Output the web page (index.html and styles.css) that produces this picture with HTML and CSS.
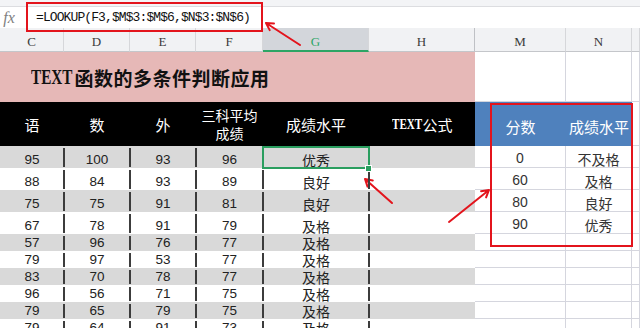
FILE: index.html
```html
<!DOCTYPE html>
<html lang="zh">
<head>
<meta charset="utf-8">
<title>TEXT函数的多条件判断应用</title>
<link rel="stylesheet" href="styles.css">
</head>
<body>
<div class="fbar">
  <div class="frow">
    <div class="fx">fx</div>
    <div class="formula">=LOOKUP(F3,$M$3:$M$6,$N$3:$N$6)</div>
  </div>
</div>
<div class="sheet">
  <div class="ch">C</div><div class="ch">D</div><div class="ch">E</div><div class="ch">F</div><div class="ch sel">G</div><div class="ch dark">H</div><div class="ch">M</div><div class="ch">N</div><div class="ch last"></div>

  <div class="title"><span class="lat">TEXT</span>函数的多条件判断应用</div><div class="g"></div><div class="g"></div><div class="g"></div>

  <div class="hd">语</div><div class="hd">数</div><div class="hd">外</div><div class="hd two">三科平均<br>成绩</div><div class="hd">成绩水平</div><div class="hd"><span class="lat2">TEXT</span>公式</div><div class="bh">分数</div><div class="bh">成绩水平</div><div class="g"></div>

  <div class="d alt s">95</div><div class="d alt s">100</div><div class="d alt s">93</div><div class="d alt s">96</div><div class="d alt cn active">优秀<span class="handle"></span></div><div class="d alt"></div><div class="g n">0</div><div class="g cn">不及格</div><div class="g"></div>

  <div class="d s">88</div><div class="d s">84</div><div class="d s">93</div><div class="d s">89</div><div class="d cn s">良好</div><div class="d"></div><div class="g n">60</div><div class="g cn">及格</div><div class="g"></div>

  <div class="d alt s">75</div><div class="d alt s">75</div><div class="d alt s">91</div><div class="d alt s">81</div><div class="d alt cn s">良好</div><div class="d alt"></div><div class="g n">80</div><div class="g cn">良好</div><div class="g"></div>

  <div class="d s">67</div><div class="d s">78</div><div class="d s">91</div><div class="d s">79</div><div class="d cn s">及格</div><div class="d"></div><div class="g n">90</div><div class="g cn">优秀</div><div class="g"></div>

  <div class="d alt s">57</div><div class="d alt s">96</div><div class="d alt s">76</div><div class="d alt s">77</div><div class="d alt cn s">及格</div><div class="d alt"></div><div class="g"></div><div class="g"></div><div class="g"></div>

  <div class="d s">79</div><div class="d s">97</div><div class="d s">53</div><div class="d s">77</div><div class="d cn s">及格</div><div class="d"></div><div class="g"></div><div class="g"></div><div class="g"></div>

  <div class="d alt s">83</div><div class="d alt s">70</div><div class="d alt s">78</div><div class="d alt s">77</div><div class="d alt cn s">及格</div><div class="d alt"></div><div class="g"></div><div class="g"></div><div class="g"></div>

  <div class="d s">96</div><div class="d s">56</div><div class="d s">71</div><div class="d s">75</div><div class="d cn s">及格</div><div class="d"></div><div class="g"></div><div class="g"></div><div class="g"></div>

  <div class="d alt s">79</div><div class="d alt s">65</div><div class="d alt s">79</div><div class="d alt s">75</div><div class="d alt cn s">及格</div><div class="d alt"></div><div class="g"></div><div class="g"></div><div class="g"></div>

  <div class="d s">79</div><div class="d s">64</div><div class="d s">91</div><div class="d s">73</div><div class="d cn s">及格</div><div class="d"></div><div class="g"></div><div class="g"></div><div class="g"></div>
</div>

<div class="mark mark-formula"></div>
<div class="mark mark-lookup"></div>
<svg class="arrows" width="640" height="328" viewBox="0 0 640 328">
  <g fill="none" stroke="#e3141c" stroke-width="2" stroke-linecap="round" stroke-linejoin="round">
    <path d="M300 45 L266 23 M269.7 30.1 L266 23 L274 23.4"/>
    <path d="M392 203 L365 179 M367.5 186.6 L365 179 L372.8 180.6"/>
    <path d="M449 222 L489 190 M481.1 191.2 L489 190 L486.1 197.4"/>
  </g>
</svg>
</body>
</html>
```
FILE: styles.css
```css
html, body {
  margin: 0;
  padding: 0;
}
body {
  width: 640px;
  height: 328px;
  overflow: hidden;
  position: relative;
  background: #fff;
  font-family: "Noto Sans CJK SC", "Noto Sans", sans-serif;
  color: #222;
}
.fbar {
  height: 28px;
  box-sizing: border-box;
  padding-top: 6px;
  background: #f3f4f6;
  border-bottom: 1px solid #cfd0d3;
}
.frow {
  display: flex;
  height: 21px;
  background: #fff;
  border-top: 1px solid #dcdde0;
  align-items: center;
}
.fx {
  width: 26px;
  text-align: center;
  font-family: "Liberation Serif", serif;
  font-style: italic;
  font-size: 16px;
  color: #808080;
  margin-left: -4px;
  line-height: 20px;
}
.formula {
  padding-left: 14px;
  font-family: "Liberation Mono", monospace;
  font-size: 13px;
  letter-spacing: -0.9px;
  color: #111;
  line-height: 20px;
}
.sheet {
  display: grid;
  grid-template-columns: 64px 66px 66px 67px 106px 106px 91px 66px 8px;
  grid-template-rows: 24px 50px 44px 22px 22px 22px 22px repeat(6, 17px);
}
.ch {
  background: #f1f2f4;
  border-right: 1px solid #d6d7da;
  border-bottom: 1px solid #c4c6ca;
  display: flex;
  justify-content: center;
  align-items: center;
  padding-top: 5px;
  font-family: "Liberation Serif", serif;
  font-size: 13px;
  color: #3a3a3a;
}
.ch.sel {
  background: #d3d6db;
  border-bottom: 2px solid #2da565;
  color: #2da565;
}
.ch.dark {
  border-right-color: #bfc1c5;
}
.title {
  grid-column: span 6;
  background: #e6b8b7;
  display: flex;
  align-items: center;
  padding-left: 31px;
  font-family: "Noto Sans CJK SC", serif;
  font-weight: bold;
  font-size: 19px;
  color: #111;
  letter-spacing: 0.5px;
}
.title .lat {
  display: inline-block;
  font-family: "Liberation Serif", serif;
  font-size: 20px;
  letter-spacing: 0;
  transform: scaleX(0.76);
  transform-origin: left center;
  margin-right: -11px;
}
.g {
  background: #fff;
  border-right: 1px solid #d5d6de;
  border-bottom: 1px solid #d5d6de;
  display: flex;
  justify-content: center;
  align-items: flex-end;
  line-height: 17px;
}
.hd {
  background: #000;
  color: #fff;
  display: flex;
  justify-content: center;
  align-items: center;
  font-size: 15px;
  text-align: center;
}
.hd.two {
  font-size: 14px;
  line-height: 18px;
  padding-bottom: 1px;
}
.hd .lat2 {
  display: inline-block;
  font-family: "Liberation Serif", serif;
  font-weight: bold;
  font-size: 15px;
  transform: scaleX(0.74);
  transform-origin: left center;
  margin-right: -10px;
}
.bh {
  background: #4f81bd;
  color: #fff;
  display: flex;
  justify-content: center;
  align-items: center;
  font-size: 15px;
  padding-top: 4px;
}
.d {
  position: relative;
  background: #fff;
  display: flex;
  justify-content: center;
  align-items: flex-end;
  line-height: 17px;
  font-family: "Liberation Sans", sans-serif;
  font-size: 13.5px;
  color: #222;
}
.d.alt {
  background: #d9d9d9;
}
.n {
  font-family: "Liberation Sans", sans-serif;
  font-size: 14px;
  color: #333;
}
.cn {
  font-family: "Noto Sans CJK SC", sans-serif;
  font-size: 14px;
  line-height: 16px;
  color: #222;
}
.g.cn {
  color: #333;
}
.d.s::after {
  content: "";
  position: absolute;
  right: -1px;
  top: 2px;
  bottom: 1px;
  width: 2px;
  background: #3c3c3c;
  z-index: 1;
}
.active::before {
  content: "";
  position: absolute;
  left: -1px;
  right: -1px;
  top: 0;
  bottom: -1px;
  border: 2px solid #2a9e5f;
  z-index: 2;
}
.handle {
  position: absolute;
  right: -3px;
  bottom: -4px;
  width: 5px;
  height: 5px;
  background: #2a9e5f;
  border: 1px solid #fff;
  z-index: 3;
}
.mark {
  position: absolute;
  border: 2px solid #e3141c;
  box-sizing: border-box;
}
.mark-formula {
  left: 26px;
  top: 2px;
  width: 237px;
  height: 30px;
}
.mark-lookup {
  left: 490px;
  top: 103px;
  width: 143px;
  height: 144px;
}
.arrows {
  position: absolute;
  left: 0;
  top: 0;
  pointer-events: none;
}
```
